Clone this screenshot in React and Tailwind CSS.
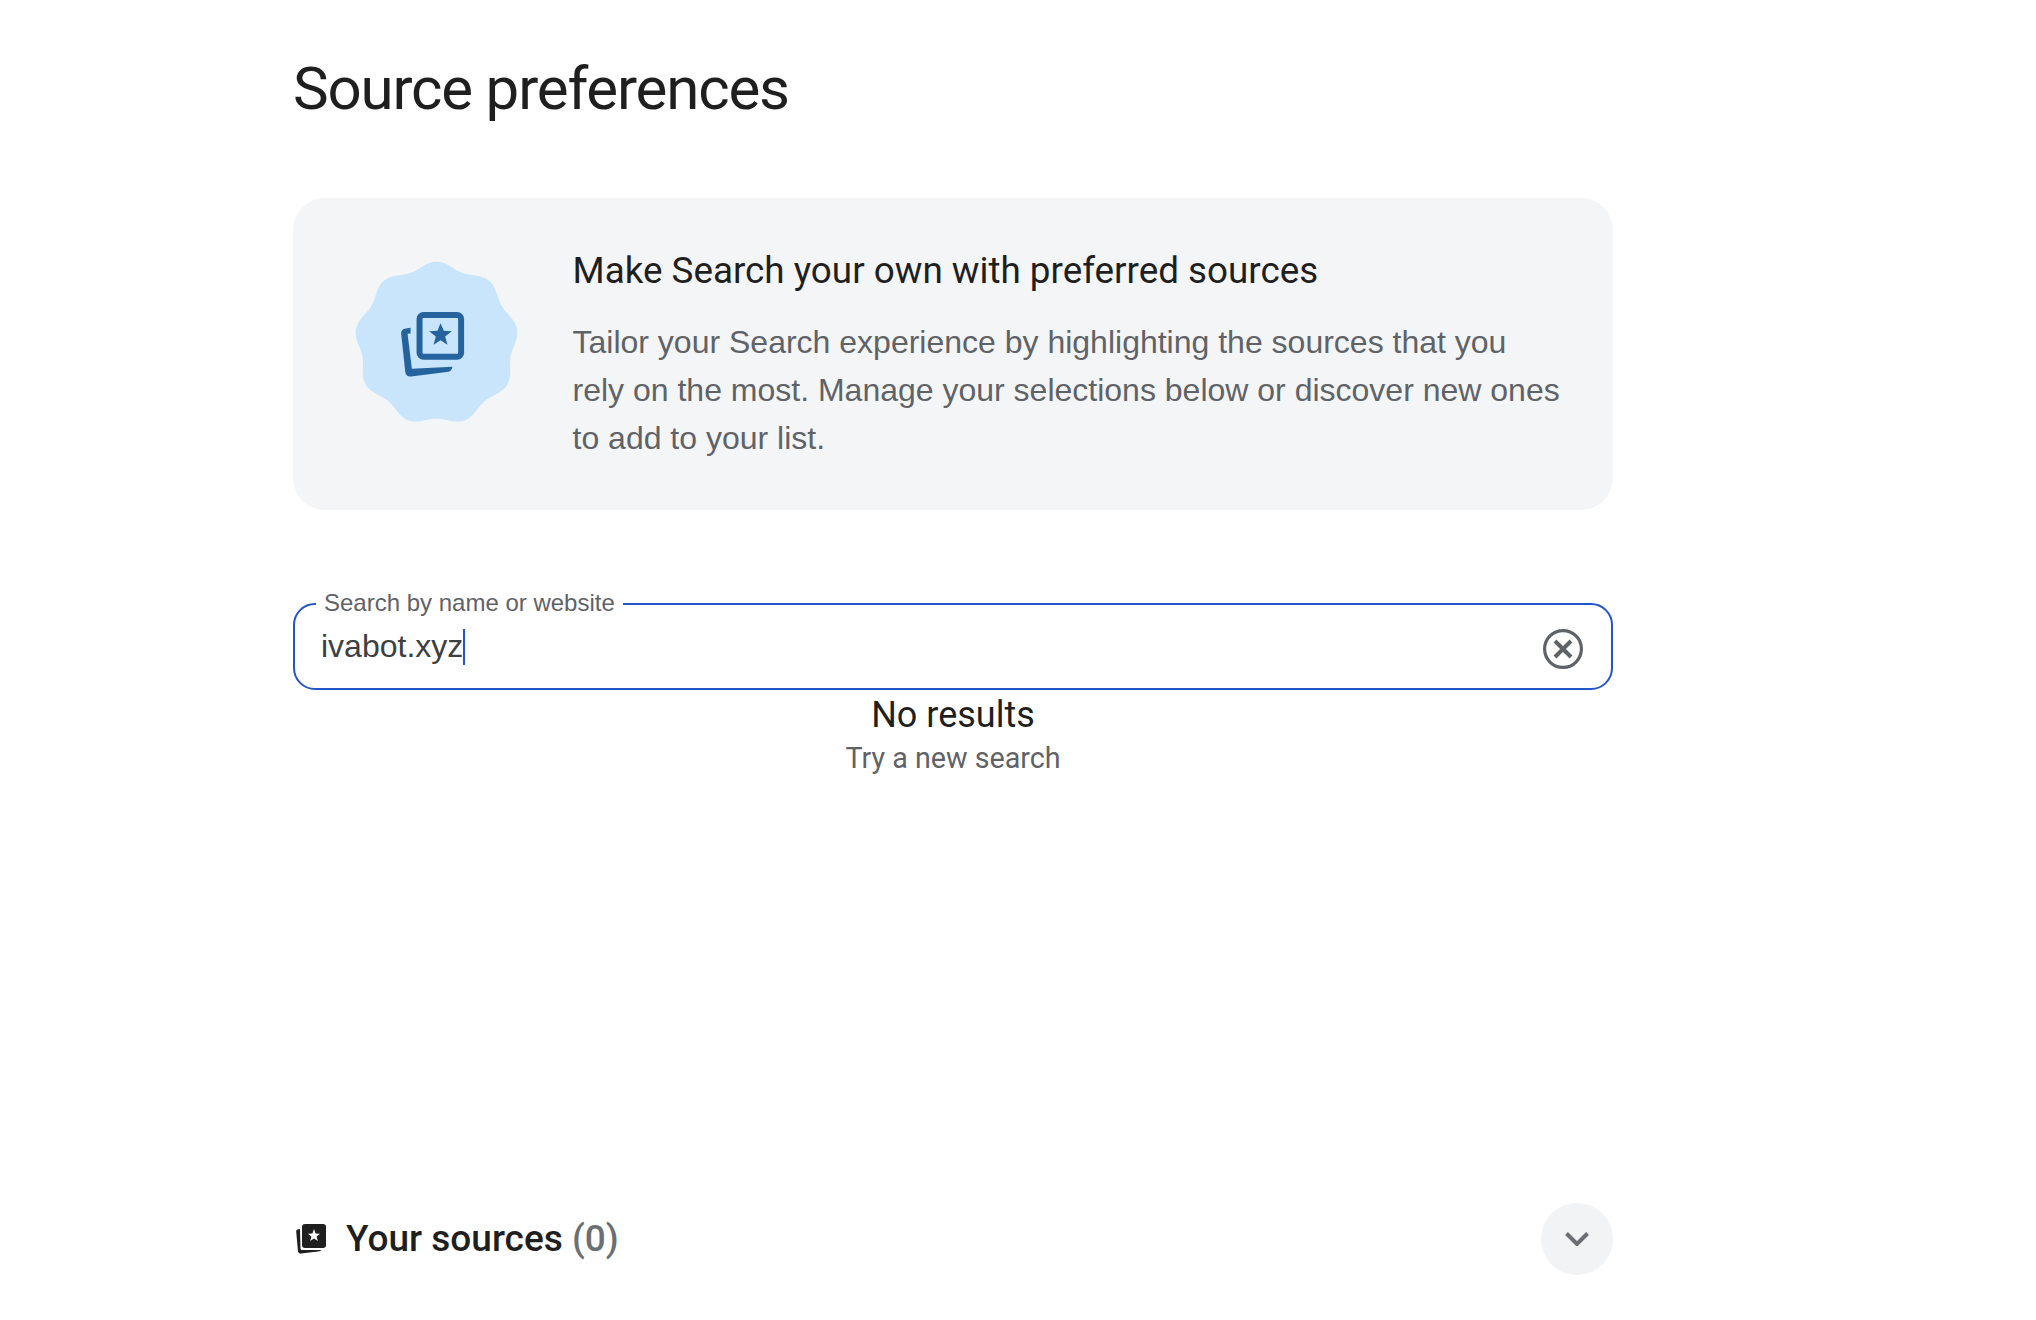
const blob = (() => {
  const pts = [];
  const n = 216;
  for (let i = 0; i < n; i++) {
    const t = (i / n) * Math.PI * 2;
    const r = 236 + 10 * Math.cos(9 * t);
    const a = t - Math.PI / 2;
    pts.push(`${(290 + r * Math.cos(a)).toFixed(1)},${(281 + r * Math.sin(a)).toFixed(1)}`);
  }
  return pts.join(" ");
})();

const STAR = "302,220 312,243 336,244 316,260 323,285 302,271 281,285 288,260 268,244 293,243";

function Blob() {
  return (
    <svg viewBox="45 30 490 490" className="w-[163px] h-[163px] shrink-0">
      <polygon points={blob} fill="#c8e5fc" />
      <rect x="239" y="195" width="125" height="126" rx="12" fill="none" stroke="#25639e" strokeWidth="18" />
      <polygon points={STAR} fill="#25639e" />
      <path d="M212 234 L198 236 Q182 238 184 254 L196 366 Q198 382 214 380 L326 366 Q335 364 338 351 L216 357 L203 252 L212 251 Z" fill="#25639e" />
    </svg>
  );
}

function SmallIcon() {
  return (
    <svg viewBox="0 0 30 30" className="w-[30px] h-[30px] shrink-0">
      <rect x="6" y="0" width="24" height="24" rx="3" fill="#1f1f1f" />
      <polygon points="18,5 19.6,9.6 24,9.8 20.6,12.6 21.8,17 18,14.4 14.2,17 15.4,12.6 12,9.8 16.4,9.6" fill="#fff" />
      <path d="M4 5 L1.5 5.5 Q0 6 0.2 7.5 L2 27.5 Q2.5 30 5 29.6 L22 27.5 Q24.5 27 25.5 26 L6 26 Q4.6 26 4.5 24.5 Z" fill="#1f1f1f" />
    </svg>
  );
}

export default function App() {
  return (
    <div className="min-h-[1320px] bg-white pl-[293px] pt-[53px] font-['Liberation_Sans',Arial,sans-serif]">
      <div className="w-[1320px]">
        <h1 className="text-[60px] leading-[72px] font-normal tracking-[-1.17px] text-[#1f1f1f] font-['Roboto',sans-serif]">Source preferences</h1>

        <section className="mt-[73px] h-[312px] rounded-[32px] bg-[#f4f5f7] flex items-start pl-[62px]">
          <div className="mt-[62px] mr-[54.5px]"><Blob /></div>
          <div className="pt-[50px] w-[992px]">
            <h2 className="text-[36.8px] leading-[46px] font-normal text-[#1f1f1f] font-['Roboto',sans-serif]">Make Search your own with preferred sources</h2>
            <p className="mt-[24px] text-[32px] leading-[48px] text-[#5f6368]">
              Tailor your Search experience by highlighting the sources that you rely on the most. Manage your selections below or discover new ones to add to your list.
            </p>
          </div>
        </section>

        <div className="relative mt-[93px] h-[87px] rounded-[22px] border-2 border-[#2255c8] flex items-center pl-[26px] pr-[28px]">
          <span className="absolute left-[21px] top-[-16px] bg-white px-[8px] text-[24px] leading-[28px] text-[#5f6368]">Search by name or website</span>
          <span className="mb-[2px] text-[32px] leading-[40px] text-[#3c4043]">ivabot.xyz</span>
          <span className="w-[2px] h-[36px] bg-[#2255c8]" />
          <svg viewBox="0 0 40 40" className="ml-auto mt-[5px] w-[40px] h-[40px] text-[#5f6368]" fill="none" stroke="currentColor">
            <circle cx="20" cy="20" r="18.4" strokeWidth="3.2" />
            <path d="M12 12 L28 28 M28 12 L12 28" strokeWidth="4" />
          </svg>
        </div>

        <div className="mt-[2px] flex flex-col items-center">
          <div className="text-[36px] leading-[46px] text-[#1f1f1f] font-['Roboto',sans-serif]">No results</div>
          <div className="text-[28.7px] leading-[40px] text-[#5f6368] font-['Roboto',sans-serif]">Try a new search</div>
        </div>

        <div className="mt-[425px] flex items-center justify-between">
          <div className="flex items-center pl-[3px]">
            <SmallIcon />
            <span className="ml-[20px] text-[37px] leading-[48px] font-medium text-[#1f1f1f] font-['Roboto',sans-serif]">
              Your sources <span className="text-[#6b6f73]">(0)</span>
            </span>
          </div>
          <button className="w-[72px] h-[72px] rounded-full bg-[#f1f3f4] flex items-center justify-center">
            <svg viewBox="0 0 24 14" className="w-[24px] h-[14px]" fill="none" stroke="#6b6f73" strokeWidth="4"><path d="M1.5 1.5 L12 12 L22.5 1.5" /></svg>
          </button>
        </div>
      </div>
    </div>
  );
}
